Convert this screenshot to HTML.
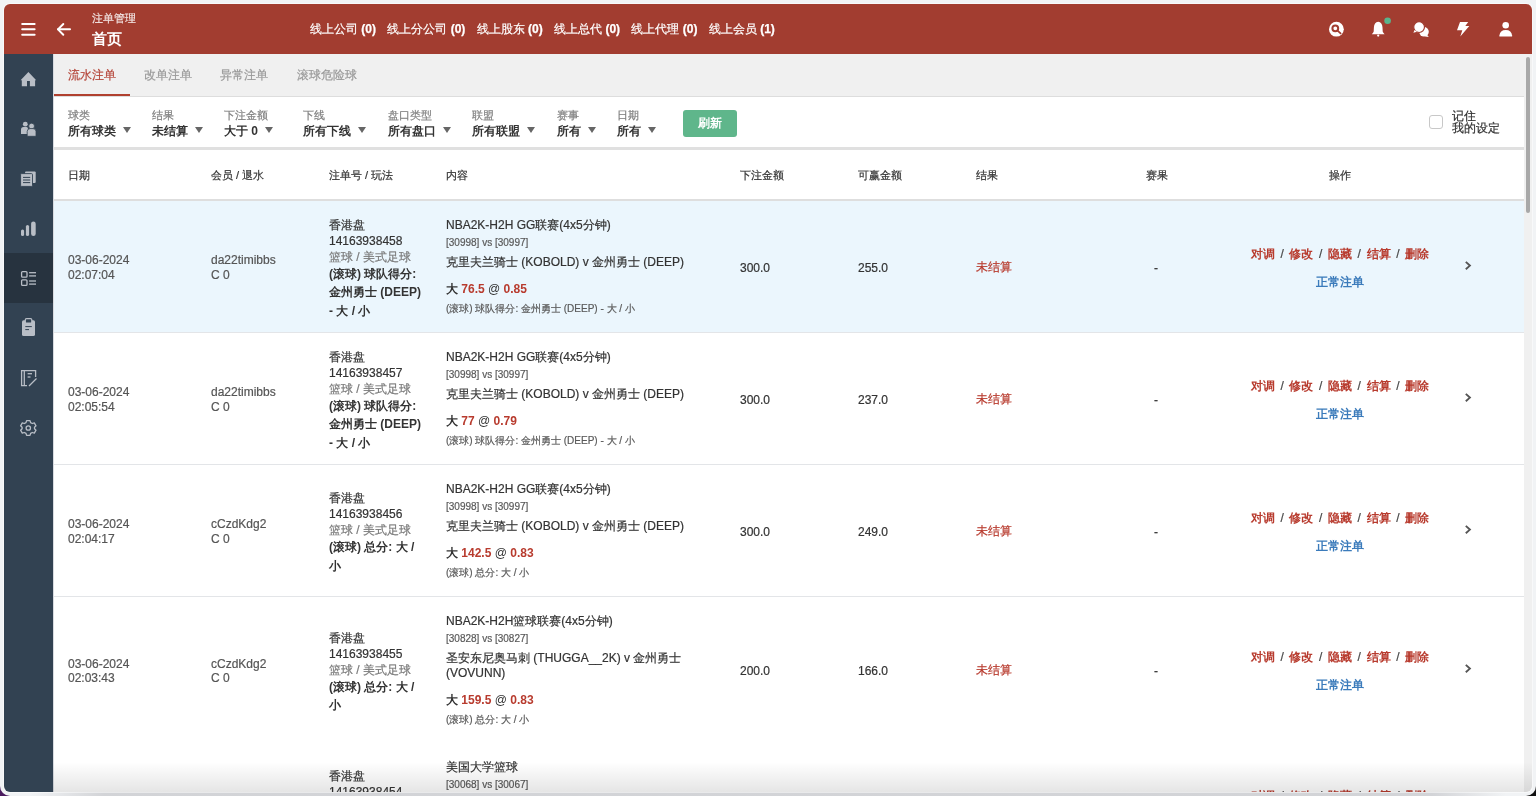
<!DOCTYPE html>
<html><head><meta charset="utf-8">
<style>
*{box-sizing:border-box;margin:0;padding:0}
html,body{-webkit-text-stroke:0.2px;width:1536px;height:796px;overflow:hidden;background:#f1f3f5;position:relative;font-family:"Liberation Sans",sans-serif;color:#333}
.frame{position:absolute;left:0;top:0;width:1536px;height:796px;background:#f1f3f5;border-radius:0 0 10px 10px}
.win{will-change:transform;position:absolute;left:4px;top:4px;width:1528px;height:788px;border-radius:6px;overflow:hidden;background:#fff;box-shadow:0 0 0 1px rgba(255,255,255,.5)}
.fade{position:absolute;left:49px;top:758px;width:1479px;height:30px;background:linear-gradient(to bottom,rgba(0,0,0,0),rgba(0,0,0,.1))}
.hdr{position:absolute;left:0;top:0;width:1528px;height:50px;background:#a23d30;color:#fff}
.side{position:absolute;left:0;top:50px;width:49px;height:738px;background:#324252}
.side .act{position:absolute;left:0;top:199px;width:49px;height:50px;background:#27333f}
.side svg{position:absolute}
.main{position:absolute;left:49px;top:50px;width:1471px;height:738px;background:#fff;border-left:1px solid #d8dbe0}
.tabs{position:absolute;left:0;top:0;width:1470px;height:43px;background:#f0f0f0;border-bottom:1px solid #ddd}
.tab{position:absolute;top:14px;font-size:12px;line-height:14px;color:#999}
.tab.on{color:#b5463a}
.uline{position:absolute;left:0;top:40px;width:76px;height:2px;background:#b0402f}
.filt{position:absolute;left:0;top:43px;width:1470px;height:53px;background:#fff;border-bottom:3px solid #e0e0e0}
.f{position:absolute;top:12px}
.f .l{font-size:11px;line-height:13px;color:#808080}
.f .v{margin-top:2px;font-size:12px;line-height:15px;color:#333;font-weight:bold;white-space:nowrap}
.tri{display:inline-block;width:0;height:0;border-left:4.7px solid transparent;border-right:4.7px solid transparent;border-top:6.2px solid #666;margin-left:7.3px;vertical-align:2.2px}
.btn{position:absolute;left:629px;top:12.7px;width:54px;height:27px;background:#5fb68b;border-radius:3px;color:#fff;font-size:12px;font-weight:bold;text-align:center;line-height:27px}
.scroll{position:absolute;left:1520px;top:50px;width:8px;height:738px;background:#f0f0f0}
.thumb{position:absolute;left:2px;top:3px;width:4px;height:156px;background:#a8a8a8;border-radius:2px}
.th{position:absolute;left:0;top:96px;width:1470px;height:51px;background:#fff;border-bottom:2px solid #dedede}
.th div{position:absolute;top:18px;font-size:11px;line-height:14px;color:#333}
.row{position:absolute;left:0;width:1470px;border-bottom:1px solid #e3e5e8;background:#fff}
.row.hl{background:#ebf6fd}
.c{position:absolute;top:0;height:100%;display:flex;align-items:center;font-size:12px;color:#333}
.c1,.c2{line-height:14.3px;color:#555}
.c1>div,.c2>div{position:relative;top:1px}
.c3 .in{width:97px;line-height:16px;position:relative;top:2px}
.c3 .b{font-weight:bold;line-height:18.5px}
.gray{color:#7a7a7a}
.c4 .in{width:245px}
.c4 .t{line-height:16px}
.c4 .s{font-size:10px;line-height:13px;color:#5a5a5a}
.red{color:#b83b2e}
.blue{color:#3b7bbb}
.ops{width:100%;text-align:center;font-weight:bold}
.ops .sep{color:#444;font-weight:normal;margin:0 5.6px}
.ops{position:relative;top:1.3px}
b,.b,.f .v,.btn,.ops,.bold0{-webkit-text-stroke:0}
.ops .sep{-webkit-text-stroke:0.2px}
.hdr b{-webkit-text-stroke:0.25px}
</style></head><body>
<div style="position:absolute;left:0;top:780px;width:16px;height:16px;background:#4a1a5e"></div><div style="position:absolute;left:1520px;top:780px;width:16px;height:16px;background:#111"></div>
<div class="frame"><div style="position:absolute;left:30px;top:792px;width:1476px;height:4px;background:linear-gradient(to right,rgba(200,201,205,0),rgba(200,201,205,.75) 5%,rgba(200,201,205,.75) 95%,rgba(200,201,205,0))"></div></div>
<div class="win">
 <div class="hdr">
  <svg style="position:absolute;left:17px;top:19px" width="16" height="13" viewBox="0 0 16 13"><g stroke="#fff" stroke-width="2" stroke-linecap="round"><line x1="1.2" y1="1" x2="13.6" y2="1"/><line x1="1.2" y1="6.2" x2="13.6" y2="6.2"/><line x1="1.2" y1="11.8" x2="13.6" y2="11.8"/></g></svg>
  <svg style="position:absolute;left:52px;top:18px" width="17" height="15" viewBox="0 0 17 15"><g stroke="#fff" stroke-width="2" fill="none" stroke-linecap="round" stroke-linejoin="round"><line x1="2" y1="7.35" x2="14" y2="7.35"/><polyline points="7.3,2 2,7.35 7.3,12.7"/></g></svg>
  <div style="position:absolute;left:88px;top:7.3px;font-size:11px;line-height:14px;color:rgba(255,255,255,.82)">注单管理</div>
  <div style="position:absolute;left:88px;top:25px;font-size:15px;line-height:20px;font-weight:bold;-webkit-text-stroke:0">首页</div>
  <div style="position:absolute;left:306px;top:18px;font-size:12px;line-height:14px;white-space:nowrap">
   <span style="margin-right:8px">线上公司 <b>(0)</b></span> <span style="margin-right:8px">线上分公司 <b>(0)</b></span> <span style="margin-right:8px">线上股东 <b>(0)</b></span> <span style="margin-right:8px">线上总代 <b>(0)</b></span> <span style="margin-right:8px">线上代理 <b>(0)</b></span> <span>线上会员 <b>(1)</b></span>
  </div>
 </div>
 <div class="side"><div class="act"></div></div>
 <div class="main">
  <div class="tabs">
   <div class="tab on" style="left:14px">流水注单</div>
   <div class="tab" style="left:90px">改单注单</div>
   <div class="tab" style="left:166px">异常注单</div>
   <div class="tab" style="left:243px">滚球危险球</div>
   <div class="uline"></div>
  </div>
  <div class="filt">
   <div class="f" style="left:14px"><div class="l">球类</div><div class="v">所有球类<span class="tri"></span></div></div>
   <div class="f" style="left:98px"><div class="l">结果</div><div class="v">未结算<span class="tri"></span></div></div>
   <div class="f" style="left:170px"><div class="l">下注金额</div><div class="v">大于 0<span class="tri"></span></div></div>
   <div class="f" style="left:249px"><div class="l">下线</div><div class="v">所有下线<span class="tri"></span></div></div>
   <div class="f" style="left:334px"><div class="l">盘口类型</div><div class="v">所有盘口<span class="tri"></span></div></div>
   <div class="f" style="left:418px"><div class="l">联盟</div><div class="v">所有联盟<span class="tri"></span></div></div>
   <div class="f" style="left:503px"><div class="l">赛事</div><div class="v">所有<span class="tri"></span></div></div>
   <div class="f" style="left:563px"><div class="l">日期</div><div class="v">所有<span class="tri"></span></div></div>
   <div class="btn">刷新</div>
   <div style="position:absolute;left:1375px;top:18px;width:14px;height:14px;border:1px solid #c8c8c8;border-radius:3px;background:#fff"></div>
   <div style="position:absolute;left:1398px;top:13px;font-size:12px;line-height:12px;color:#333">记住<br>我的设定</div>
  </div>
  <div class="th">
   <div style="left:14px">日期</div>
   <div style="left:157px">会员 / 退水</div>
   <div style="left:275px">注单号 / 玩法</div>
   <div style="left:392px">内容</div>
   <div style="left:686px">下注金额</div>
   <div style="left:804px">可赢金额</div>
   <div style="left:922px">结果</div>
   <div style="left:1092px">赛果</div>
   <div style="left:1275px">操作</div>
  </div>
  <div class="row hl" style="top:147px;height:132px">
 <div class="c c1" style="left:14px"><div>03-06-2024<br>02:07:04</div></div>
 <div class="c c2" style="left:157px"><div>da22timibbs<br>C 0</div></div>
 <div class="c c3" style="left:275px"><div class="in">香港盘<br>14163938458<br><span class="gray">篮球 / 美式足球</span><div class="b">(滚球) 球队得分:</div><div class="b">金州勇士 (DEEP)</div><div class="b">- 大 / 小</div></div></div>
 <div class="c c4" style="left:392px"><div class="in"><div class="t" style="position:relative;top:-1px">NBA2K-H2H GG联赛(4x5分钟)</div><div class="s" style="margin-top:3px;position:relative;top:-0.7px">[30998] vs [30997]</div><div class="t" style="margin-top:5.5px;line-height:15px">克里夫兰骑士 (KOBOLD) v 金州勇士 (DEEP)</div><div class="t b" style="margin-top:11px;font-weight:bold">大 <span class="red">76.5</span> <span style="font-weight:normal">@</span> <span class="red">0.85</span></div><div class="s" style="margin-top:5px">(滚球) 球队得分: 金州勇士 (DEEP) - 大 / 小</div></div></div>
 <div class="c" style="left:686px;top:1px">300.0</div>
 <div class="c" style="left:804px;top:1px">255.0</div>
 <div class="c red" style="left:922px;top:0.5px">未结算</div>
 <div class="c" style="left:1100px;top:1px">-</div>
 <div class="c" style="left:1150px;width:272px"><div class="ops"><div class="red" style="line-height:16px"><span>对调</span><span class="sep">/</span><span>修改</span><span class="sep">/</span><span>隐藏</span><span class="sep">/</span><span>结算</span><span class="sep">/</span><span>删除</span></div><div class="blue" style="margin-top:12px;line-height:16px">正常注单</div></div></div>
 <svg style="position:absolute;left:1410px;top:60px" width="8" height="12" viewBox="0 0 8 12"><polyline points="1.8,0.9 5.9,4.6 1.8,8.3" fill="none" stroke="#555" stroke-width="1.9"/></svg>
</div>
<div class="row" style="top:279px;height:132px">
 <div class="c c1" style="left:14px"><div>03-06-2024<br>02:05:54</div></div>
 <div class="c c2" style="left:157px"><div>da22timibbs<br>C 0</div></div>
 <div class="c c3" style="left:275px"><div class="in">香港盘<br>14163938457<br><span class="gray">篮球 / 美式足球</span><div class="b">(滚球) 球队得分:</div><div class="b">金州勇士 (DEEP)</div><div class="b">- 大 / 小</div></div></div>
 <div class="c c4" style="left:392px"><div class="in"><div class="t" style="position:relative;top:-1px">NBA2K-H2H GG联赛(4x5分钟)</div><div class="s" style="margin-top:3px;position:relative;top:-0.7px">[30998] vs [30997]</div><div class="t" style="margin-top:5.5px;line-height:15px">克里夫兰骑士 (KOBOLD) v 金州勇士 (DEEP)</div><div class="t b" style="margin-top:11px;font-weight:bold">大 <span class="red">77</span> <span style="font-weight:normal">@</span> <span class="red">0.79</span></div><div class="s" style="margin-top:5px">(滚球) 球队得分: 金州勇士 (DEEP) - 大 / 小</div></div></div>
 <div class="c" style="left:686px;top:1px">300.0</div>
 <div class="c" style="left:804px;top:1px">237.0</div>
 <div class="c red" style="left:922px;top:0.5px">未结算</div>
 <div class="c" style="left:1100px;top:1px">-</div>
 <div class="c" style="left:1150px;width:272px"><div class="ops"><div class="red" style="line-height:16px"><span>对调</span><span class="sep">/</span><span>修改</span><span class="sep">/</span><span>隐藏</span><span class="sep">/</span><span>结算</span><span class="sep">/</span><span>删除</span></div><div class="blue" style="margin-top:12px;line-height:16px">正常注单</div></div></div>
 <svg style="position:absolute;left:1410px;top:60px" width="8" height="12" viewBox="0 0 8 12"><polyline points="1.8,0.9 5.9,4.6 1.8,8.3" fill="none" stroke="#555" stroke-width="1.9"/></svg>
</div>
<div class="row" style="top:411px;height:132px">
 <div class="c c1" style="left:14px"><div>03-06-2024<br>02:04:17</div></div>
 <div class="c c2" style="left:157px"><div>cCzdKdg2<br>C 0</div></div>
 <div class="c c3" style="left:275px"><div class="in">香港盘<br>14163938456<br><span class="gray">篮球 / 美式足球</span><div class="b">(滚球) 总分: 大 /</div><div class="b">小</div></div></div>
 <div class="c c4" style="left:392px"><div class="in"><div class="t" style="position:relative;top:-1px">NBA2K-H2H GG联赛(4x5分钟)</div><div class="s" style="margin-top:3px;position:relative;top:-0.7px">[30998] vs [30997]</div><div class="t" style="margin-top:5.5px;line-height:15px">克里夫兰骑士 (KOBOLD) v 金州勇士 (DEEP)</div><div class="t b" style="margin-top:11px;font-weight:bold">大 <span class="red">142.5</span> <span style="font-weight:normal">@</span> <span class="red">0.83</span></div><div class="s" style="margin-top:5px">(滚球) 总分: 大 / 小</div></div></div>
 <div class="c" style="left:686px;top:1px">300.0</div>
 <div class="c" style="left:804px;top:1px">249.0</div>
 <div class="c red" style="left:922px;top:0.5px">未结算</div>
 <div class="c" style="left:1100px;top:1px">-</div>
 <div class="c" style="left:1150px;width:272px"><div class="ops"><div class="red" style="line-height:16px"><span>对调</span><span class="sep">/</span><span>修改</span><span class="sep">/</span><span>隐藏</span><span class="sep">/</span><span>结算</span><span class="sep">/</span><span>删除</span></div><div class="blue" style="margin-top:12px;line-height:16px">正常注单</div></div></div>
 <svg style="position:absolute;left:1410px;top:60px" width="8" height="12" viewBox="0 0 8 12"><polyline points="1.8,0.9 5.9,4.6 1.8,8.3" fill="none" stroke="#555" stroke-width="1.9"/></svg>
</div>
<div class="row" style="top:543px;height:147px">
 <div class="c c1" style="left:14px"><div>03-06-2024<br>02:03:43</div></div>
 <div class="c c2" style="left:157px"><div>cCzdKdg2<br>C 0</div></div>
 <div class="c c3" style="left:275px"><div class="in">香港盘<br>14163938455<br><span class="gray">篮球 / 美式足球</span><div class="b">(滚球) 总分: 大 /</div><div class="b">小</div></div></div>
 <div class="c c4" style="left:392px"><div class="in"><div class="t" style="position:relative;top:-1px">NBA2K-H2H篮球联赛(4x5分钟)</div><div class="s" style="margin-top:3px;position:relative;top:-0.7px">[30828] vs [30827]</div><div class="t" style="margin-top:5.5px;line-height:15px">圣安东尼奥马刺 (THUGGA__2K) v 金州勇士 (VOVUNN)</div><div class="t b" style="margin-top:11px;font-weight:bold">大 <span class="red">159.5</span> <span style="font-weight:normal">@</span> <span class="red">0.83</span></div><div class="s" style="margin-top:5px">(滚球) 总分: 大 / 小</div></div></div>
 <div class="c" style="left:686px;top:1px">200.0</div>
 <div class="c" style="left:804px;top:1px">166.0</div>
 <div class="c red" style="left:922px;top:0.5px">未结算</div>
 <div class="c" style="left:1100px;top:1px">-</div>
 <div class="c" style="left:1150px;width:272px"><div class="ops"><div class="red" style="line-height:16px"><span>对调</span><span class="sep">/</span><span>修改</span><span class="sep">/</span><span>隐藏</span><span class="sep">/</span><span>结算</span><span class="sep">/</span><span>删除</span></div><div class="blue" style="margin-top:12px;line-height:16px">正常注单</div></div></div>
 <svg style="position:absolute;left:1410px;top:67px" width="8" height="12" viewBox="0 0 8 12"><polyline points="1.8,0.9 5.9,4.6 1.8,8.3" fill="none" stroke="#555" stroke-width="1.9"/></svg>
</div>
<div class="row" style="top:689px;height:132px">
 <div class="c c1" style="left:14px"><div>03-06-2024<br>02:02:10</div></div>
 <div class="c c2" style="left:157px"><div>cCzdKdg2<br>C 0</div></div>
 <div class="c c3" style="left:275px"><div class="in">香港盘<br>14163938454<br><span class="gray">篮球 / 美式足球</span><div class="b">(滚球) 总分: 大 /</div><div class="b">小</div></div></div>
 <div class="c c4" style="left:392px"><div class="in"><div class="t" style="position:relative;top:-1px">美国大学篮球</div><div class="s" style="margin-top:3px;position:relative;top:-0.7px">[30068] vs [30067]</div><div class="t" style="margin-top:5.5px;line-height:15px">克里夫兰骑士 (KOBOLD) v 金州勇士 (DEEP)</div><div class="t b" style="margin-top:11px;font-weight:bold">大 <span class="red">142.5</span> <span style="font-weight:normal">@</span> <span class="red">0.83</span></div><div class="s" style="margin-top:5px">(滚球) 总分: 大 / 小</div></div></div>
 <div class="c" style="left:686px;top:1px">300.0</div>
 <div class="c" style="left:804px;top:1px">249.0</div>
 <div class="c red" style="left:922px;top:0.5px">未结算</div>
 <div class="c" style="left:1100px;top:1px">-</div>
 <div class="c" style="left:1150px;width:272px"><div class="ops"><div class="red" style="line-height:16px"><span>对调</span><span class="sep">/</span><span>修改</span><span class="sep">/</span><span>隐藏</span><span class="sep">/</span><span>结算</span><span class="sep">/</span><span>删除</span></div><div class="blue" style="margin-top:12px;line-height:16px">正常注单</div></div></div>
 <svg style="position:absolute;left:1410px;top:60px" width="8" height="12" viewBox="0 0 8 12"><polyline points="1.8,0.9 5.9,4.6 1.8,8.3" fill="none" stroke="#555" stroke-width="1.9"/></svg>
</div>
 </div>
 <div class="scroll"><div class="thumb"></div></div>
 <div class="fade"></div>
</div>
<svg style="position:absolute;left:0;top:0" width="1536" height="796" viewBox="0 0 1536 796">
 <g fill="#b9bec6">
  <path d="M28.4,71.9 L36.2,80.2 L35.1,80.2 L35.1,86.2 L29.9,86.2 L29.9,81 L27,81 L27,86.2 L21.8,86.2 L21.8,80.2 L20.6,80.2 Z"/>
  <circle cx="25.3" cy="124.2" r="2.4"/>
  <path d="M21,134 L21,129.5 Q21,127 23.5,127 L26.5,127 Q28,127 28,129 L28,134 Z"/>
  <circle cx="31.6" cy="126.1" r="2.9" stroke="#324252" stroke-width="0.8"/>
  <path d="M27.2,136.3 L27.2,131.5 Q27.2,128.6 30.2,128.6 L33,128.6 Q36,128.6 36,131.5 L36,136.3 Z" stroke="#324252" stroke-width="0.8"/>
  <rect x="25" y="171.5" width="10.7" height="11.5" rx="1"/>
  <rect x="20.6" y="173.6" width="11.9" height="12.8" rx="1" stroke="#324252" stroke-width="0.9"/>
  <rect x="21" y="229.5" width="3.1" height="6.6" rx="1.5"/>
  <rect x="25.9" y="225" width="3.2" height="11.1" rx="1.6"/>
  <rect x="31.1" y="221.4" width="4.6" height="14.7" rx="2.3"/>
  <rect x="22" y="320.3" width="13" height="15.7" rx="1.6"/>
  <path d="M36.5,378.5 L29,386" stroke="#b9bec6" stroke-width="1.3" fill="none"/>
 </g>
 <g stroke="#324252" stroke-width="1">
  <line x1="23" y1="177.4" x2="30.2" y2="177.4"/><line x1="23" y1="180" x2="30.2" y2="180"/><line x1="23" y1="182.6" x2="30.2" y2="182.6"/>
  <line x1="25.3" y1="326.6" x2="31.8" y2="326.6"/><line x1="25.3" y1="329.6" x2="29" y2="329.6"/>
 </g>
 <rect x="25.3" y="318.6" width="6.5" height="4.5" rx="1.2" fill="#324252" stroke="#b9bec6" stroke-width="1.2"/>
 <g fill="none" stroke="#b9bec6" stroke-width="1.3">
  <rect x="21.6" y="271.6" width="5.4" height="5.6" rx="1"/>
  <rect x="21.6" y="279.8" width="5.4" height="5.6" rx="1"/>
  <line x1="29.1" y1="272.7" x2="36" y2="272.7"/><line x1="29.1" y1="275.9" x2="36" y2="275.9"/>
  <line x1="29.1" y1="281" x2="36" y2="281"/><line x1="29.1" y1="284.1" x2="36" y2="284.1"/>
  <path d="M35.6,377 L35.6,370.6 L21.6,370.6 L21.6,385.6 L27,385.6"/>
  <line x1="24.3" y1="370.6" x2="24.3" y2="385.6"/>
  <line x1="27.6" y1="373.7" x2="32" y2="373.7"/><line x1="27.6" y1="377" x2="30.5" y2="377"/>
  <circle cx="28.3" cy="428" r="2.2"/>
  <path d="M26.6,420.6 L30,420.6 L30.6,422.6 L32.3,423.5 L34.3,422.9 L36,425.8 L34.5,427.3 L34.5,428.7 L36,430.2 L34.3,433.1 L32.3,432.5 L30.6,433.4 L30,435.4 L26.6,435.4 L26,433.4 L24.3,432.5 L22.3,433.1 L20.6,430.2 L22.1,428.7 L22.1,427.3 L20.6,425.8 L22.3,422.9 L24.3,423.5 L26,422.6 Z" stroke-linejoin="round"/>
 </g>
 <g fill="#fff">
  <circle cx="1336.4" cy="29.2" r="7.4"/>
  <path d="M1378.2,21.8 Q1382.3,22.3 1382.5,27.5 L1382.7,31.6 Q1383,33 1384.6,34.2 L1371.8,34.2 Q1373.4,33 1373.7,31.6 L1373.9,27.5 Q1374.1,22.3 1378.2,21.8 Z"/>
  <circle cx="1378.2" cy="35.6" r="1.1"/>
  <circle cx="1424" cy="31.8" r="4.8"/>
  <path d="M1427.2,35 L1428.8,37 L1425,36.5 Z"/>
  <circle cx="1419.1" cy="27.1" r="5.4" stroke="#a23d30" stroke-width="1.2"/>
  <path d="M1414.5,30 L1413.4,32.8 L1417,31.8 Z"/>
  <path d="M1460,22 L1468.2,22 L1465.3,26.1 L1469.3,26.1 L1460.3,36.6 L1462.3,30.3 L1457,30.3 Z"/>
  <circle cx="1505.7" cy="25.2" r="3.3"/>
  <path d="M1499.4,36.6 L1512.1,36.6 L1512.1,35.5 Q1511.6,29.9 1505.75,29.9 Q1499.9,29.9 1499.4,35.5 Z"/>
 </g>
 <circle cx="1335.3" cy="28.3" r="2.9" fill="none" stroke="#a23d30" stroke-width="2"/>
 <line x1="1337.8" y1="30.8" x2="1340.6" y2="33.4" stroke="#a23d30" stroke-width="1.8" stroke-linecap="round"/>
 <circle cx="1387.6" cy="20.8" r="3.3" fill="#5ab48c"/>
</svg>
</body></html>
